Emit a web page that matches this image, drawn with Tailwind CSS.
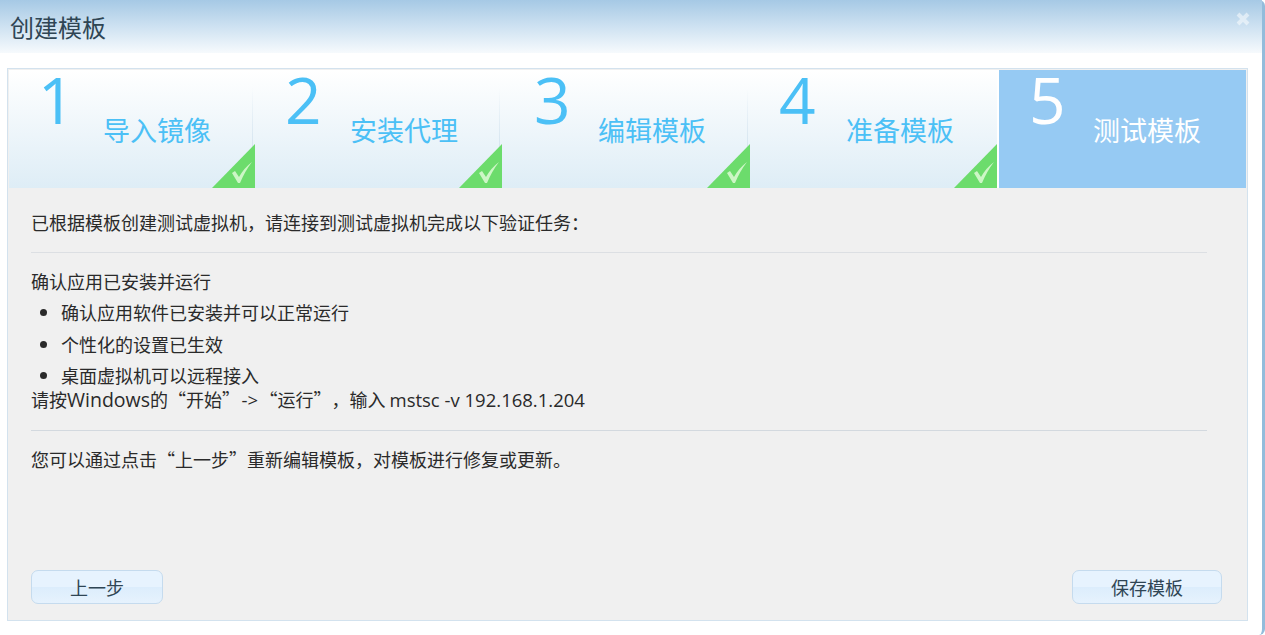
<!DOCTYPE html>
<html lang="zh-CN">
<head>
    <meta charset="UTF-8">
    <title>创建模板</title>
    <script src="https://cdn.jsdelivr.net/npm/@tailwindcss/browser@4"></script>
</head>
<body class="bg-white font-['Noto_Sans_CJK_SC',sans-serif] overflow-hidden">
    <div class="w-[1265px] h-[635px] flex flex-col bg-white rounded-r-md border-r-[3px] border-[#93bcdb]">
        <!-- title bar -->
        <header class="h-[53px] shrink-0 flex items-center justify-between pl-[10px] pr-[12px] bg-gradient-to-b from-[#a6c9e5] to-[#f6fafd]">
            <h1 class="text-[24px] font-normal text-[#2f4554]">创建模板</h1>
            <svg class="-mt-[15px]" width="14" height="14" viewBox="0 0 14 14"><path d="M2 2 L12 12 M12 2 L2 12" stroke="#ffffff" stroke-opacity="0.5" stroke-width="4"/></svg>
        </header>

        <!-- wizard panel -->
        <main class="mt-[15px] ml-[7px] w-[1241px] h-[553px] border border-[#d3e2ee] flex flex-col bg-[#f0f0f0] p-px">
            <div class="h-[118px] shrink-0 grid grid-cols-[246px_247px_248px_247px_249px]">
                <div class="relative bg-gradient-to-b from-white to-[#deedf6]">
                    <div class="flex items-start">
                        <span class="w-[94px] pl-[29px] -mt-[2px] font-['Open_Sans'] text-[64px] leading-[64px] text-[#4bc0f6]">1</span>
                        <span class="mt-[42px] text-[27px] leading-[36px] text-[#4bc0f6]">导入镜像</span>
                    </div>
                    <div class="absolute right-[2px] top-[18px] bottom-[36px] w-px bg-gradient-to-b from-transparent to-[#d5e4ef]"></div>
                    <svg class="absolute right-0 bottom-0" width="43" height="44" viewBox="0 0 43 44"><polygon points="43,0 43,44 0,44" fill="#6cdc6c"/><path d="M20 29 L23 27 L27 33 Q32 24 40 18 Q33 27 28 39 L26 39 Z" fill="#cdf6c6"/></svg>
                </div>
                <div class="relative bg-gradient-to-b from-white to-[#deedf6]">
                    <div class="flex items-start">
                        <span class="w-[95px] pl-[30px] -mt-[2px] font-['Open_Sans'] text-[64px] leading-[64px] text-[#4bc0f6]">2</span>
                        <span class="mt-[42px] text-[27px] leading-[36px] text-[#4bc0f6]">安装代理</span>
                    </div>
                    <div class="absolute right-[2px] top-[18px] bottom-[36px] w-px bg-gradient-to-b from-transparent to-[#d5e4ef]"></div>
                    <svg class="absolute right-0 bottom-0" width="43" height="44" viewBox="0 0 43 44"><polygon points="43,0 43,44 0,44" fill="#6cdc6c"/><path d="M20 29 L23 27 L27 33 Q32 24 40 18 Q33 27 28 39 L26 39 Z" fill="#cdf6c6"/></svg>
                </div>
                <div class="relative bg-gradient-to-b from-white to-[#deedf6]">
                    <div class="flex items-start">
                        <span class="w-[96px] pl-[32px] -mt-[2px] font-['Open_Sans'] text-[64px] leading-[64px] text-[#4bc0f6]">3</span>
                        <span class="mt-[42px] text-[27px] leading-[36px] text-[#4bc0f6]">编辑模板</span>
                    </div>
                    <div class="absolute right-[2px] top-[18px] bottom-[36px] w-px bg-gradient-to-b from-transparent to-[#d5e4ef]"></div>
                    <svg class="absolute right-0 bottom-0" width="43" height="44" viewBox="0 0 43 44"><polygon points="43,0 43,44 0,44" fill="#6cdc6c"/><path d="M20 29 L23 27 L27 33 Q32 24 40 18 Q33 27 28 39 L26 39 Z" fill="#cdf6c6"/></svg>
                </div>
                <div class="relative bg-gradient-to-b from-white to-[#deedf6]">
                    <div class="flex items-start">
                        <span class="w-[96px] pl-[29px] -mt-[2px] font-['Open_Sans'] text-[64px] leading-[64px] text-[#4bc0f6]">4</span>
                        <span class="mt-[42px] text-[27px] leading-[36px] text-[#4bc0f6]">准备模板</span>
                    </div>
                    <svg class="absolute right-0 bottom-0" width="43" height="44" viewBox="0 0 43 44"><polygon points="43,0 43,44 0,44" fill="#6cdc6c"/><path d="M20 29 L23 27 L27 33 Q32 24 40 18 Q33 27 28 39 L26 39 Z" fill="#cdf6c6"/></svg>
                </div>
                <div class="bg-[#96caf3] border-l-2 border-white">
                    <div class="flex items-start">
                        <span class="w-[94px] pl-[30px] -mt-[2px] font-['Open_Sans'] text-[64px] leading-[64px] text-white">5</span>
                        <span class="mt-[42px] text-[27px] leading-[36px] text-white">测试模板</span>
                    </div>
                </div>
            </div>

            <!-- body -->
            <section class="flex-1 flex flex-col text-[18px] text-[#2a2a2a]">
                <div class="pl-[22px] pr-[39px] pt-[23px]">
                    <p class="leading-[22px]">已根据模板创建测试虚拟机，请连接到测试虚拟机完成以下验证任务：</p>
                    <hr class="mt-[19px] border-t border-[#dcdfe3]">
                    <p class="mt-[16px] leading-[24px]">确认应用已安装并运行</p>
                    <ul class="list-disc pl-[30px] mt-[7px]">
                        <li class="leading-[24px]">确认应用软件已安装并可以正常运行</li>
                        <li class="mt-[8px] leading-[24px]">个性化的设置已生效</li>
                        <li class="mt-[7px] leading-[24px]">桌面虚拟机可以远程接入</li>
                    </ul>
                    <p class="leading-[24px] [text-spacing-trim:space-all]">请按<span class="font-['Open_Sans'] text-[19.5px] leading-none">Windows</span>的“开始”<span class="font-['Open_Sans'] text-[18.5px] leading-none px-[1.5px]">-&gt;</span>“运行”，输入 <span class="font-['Open_Sans'] text-[18.5px] leading-none">mstsc -v 192.168.1.204</span></p>
                    <hr class="mt-[19px] border-t border-[#d3d9df]">
                    <p class="mt-[16px] leading-[24px]">您可以通过点击“上一步”重新编辑模板，对模板进行修复或更新。</p>
                </div>
                <div class="mt-auto mb-[15px] pl-[22px] pr-[24px] flex justify-between">
                    <button class="w-[132px] h-[34px] rounded-[7px] border border-[#c5dbee] text-[18px] text-[#2f4554] bg-[linear-gradient(#e7f3fe_50%,#dcedfc_50%,#e6f2fd)]">上一步</button>
                    <button class="w-[150px] h-[34px] rounded-[7px] border border-[#c5dbee] text-[18px] text-[#2f4554] bg-[linear-gradient(#e7f3fe_50%,#dcedfc_50%,#e6f2fd)]">保存模板</button>
                </div>
            </section>
        </main>
    </div>
</body>
</html>
